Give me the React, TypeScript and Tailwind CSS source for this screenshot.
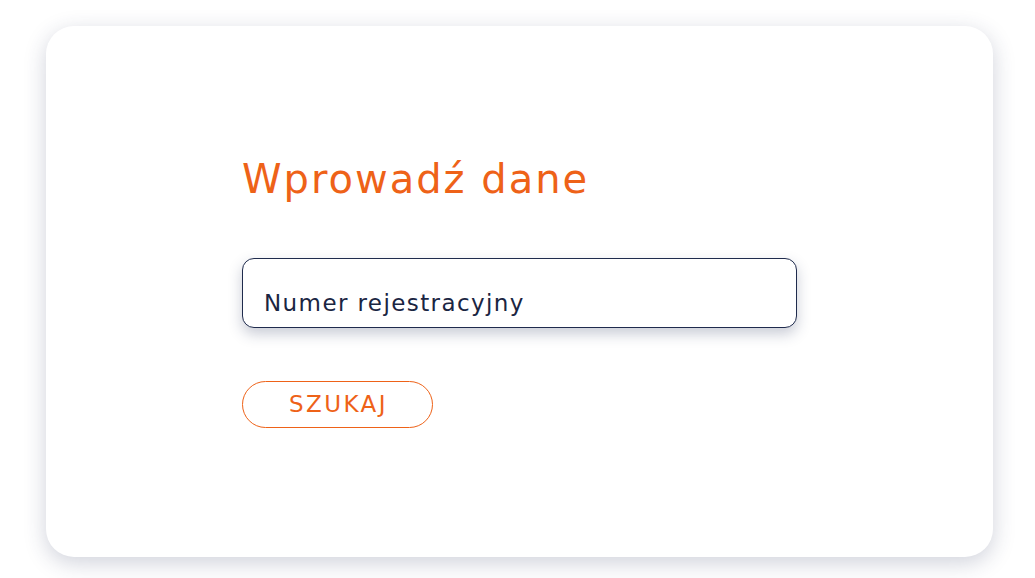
export default function App() {
  return (
    <div className="min-h-screen bg-white pt-[26px] pl-[46px] pr-[42px] font-['DejaVu_Sans',sans-serif]">
      <div className="h-[531px] rounded-[28px] bg-white shadow-[0_6px_22px_rgba(40,50,90,0.22)] pl-[196px] pt-[125px]">
        <h1 className="text-[40px] leading-[56px] tracking-[2px] font-normal text-[#ee6218]">Wprowadź dane</h1>
        <div className="mt-[51px] w-[555px] h-[70px] rounded-[12px] border border-[#1f2b4d] bg-white shadow-[0_6px_14px_rgba(40,50,90,0.25)] pl-[21px] pt-[28px]">
          <span className="text-[23px] leading-[32px] tracking-[1.4px] text-[#1a2542]">Numer rejestracyjny</span>
        </div>
        <button className="mt-[53px] w-[191px] h-[47px] rounded-full border border-[#ee6218] text-[23px] tracking-[2.4px] pl-[2px] text-[#ee6218] flex items-center justify-center">
          SZUKAJ
        </button>
      </div>
    </div>
  );
}
